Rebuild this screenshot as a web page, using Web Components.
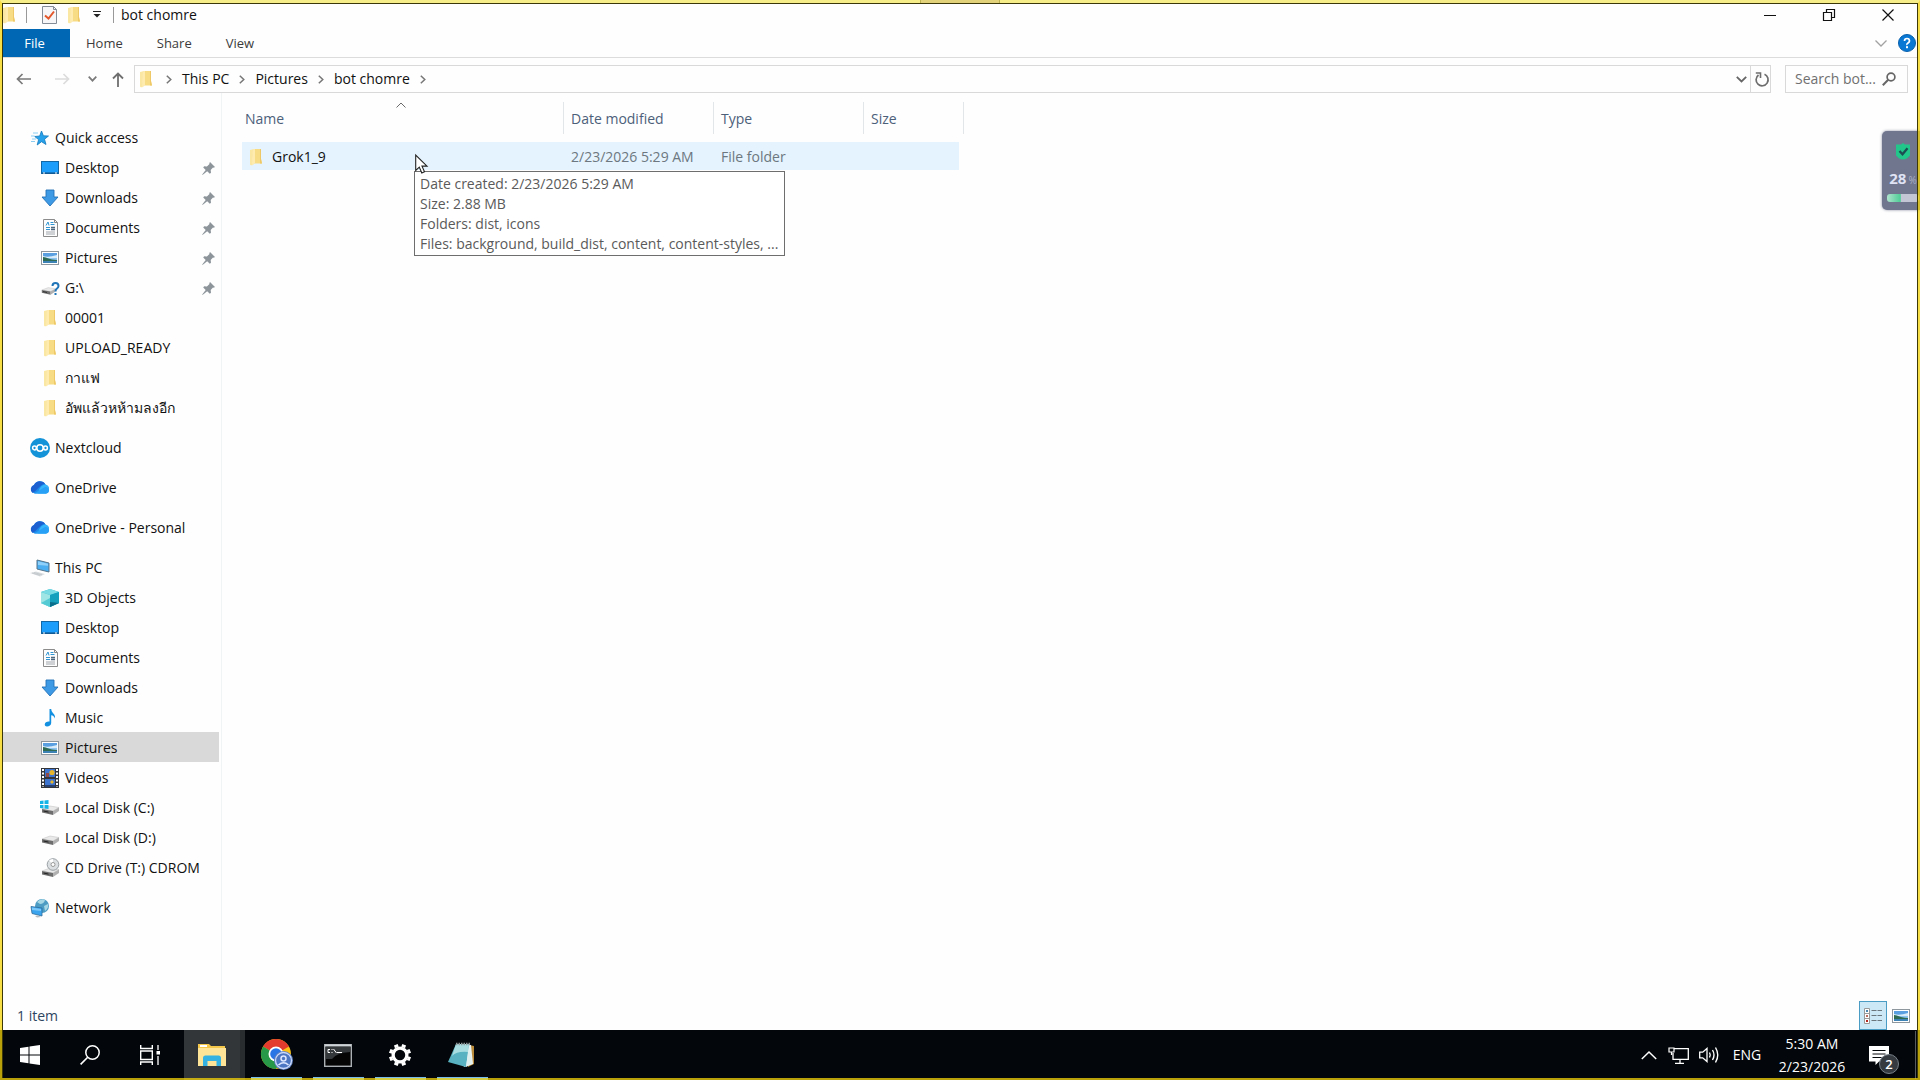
<!DOCTYPE html>
<html lang="en">
<head>
<meta charset="utf-8">
<title>bot chomre</title>
<style>
  html, body { height: 100%; margin: 0; }
  body { overflow: hidden; background: #fff; font: 14px/20px "Open Sans", "Noto Sans", sans-serif; color: #111; }
</style>
</head>
<body>
<desktop-screen>
  <explorer-window></explorer-window>
  <task-bar slot="taskbar"></task-bar>
  <usage-widget slot="overlay"></usage-widget>
</desktop-screen>

<script>
const folder = '<g transform="translate(-1 0)"><path d="M1 2l4-1v15l-3 1.500-1-1z" fill="#fbe7a4"/><path d="M4 1h8v10l1 4.500H4z" fill="#f8dc85"/><path d="M4 1h2v14l-3 2.500z" fill="#fdebb0"/><path d="M11 1h1v10l1 4.500h-2z" fill="#eec866"/></g>';
const picture = '<rect x=".5" y=".5" width="17" height="13" fill="#fff" stroke="#8e979e"/><rect x="2" y="2" width="14" height="10" fill="#8cc4ef"/><path d="M2 2h14v3q-7 3-14 2z" fill="#5aa0e0"/><path d="M2 5q5 2 14-1v3H2z" fill="#d8ecfa"/><path d="M2 6c4 0 6 3 14 3v1H2z" fill="#2f6b52"/><path d="M2 10h14v2H2z" fill="#3c82b4"/>';
const drive = '<path d="M1 10l8-3 9 1.500-6 3.500z" fill="#e9e9e9" stroke="#bdbdbd" stroke-width=".5"/><path d="M1 10l11 2v4L1 13.500z" fill="#6e6e6e"/><path d="M12 12l6-3.500V12l-6 4z" fill="#b0b0b0"/><path d="M2.500 12l5 1.100" stroke="#222"/>';
const cloud = '<path d="M5 13.500A4.500 4.500 0 0 1 4 5 6.500 6.500 0 0 1 15.500 4.500 4.800 4.800 0 0 1 16 13.500z" fill="#1b87e8"/><path d="M4 5A6.500 6.500 0 0 1 15 3.800C9 5 8 10 2.500 13A4.600 4.600 0 0 1 4 5z" fill="#1b5fd0"/><path d="M8 13.500C9 8 12 4.300 15.500 4.500A4.800 4.800 0 0 1 16 13.500z" fill="#36b4fb"/><path d="M4 13.500l11-6.500a4 4 0 0 1 4 3.800 3 3 0 0 1-3 2.700z" fill="#27a0f5"/>';

// name: [width, height, markup]
const ICONS = {
  folder: [13, 18, folder],
  picture: [18, 14, picture],
  checkdoc: [15, 18, '<path d="M.5.500h11l3 3v14H.500z" fill="#f6f6f8" stroke="#848c98"/><path d="M11.500.500v3h3" fill="none" stroke="#848c98"/><path d="M3 9.500l3.500 3L12 5.500" fill="none" stroke="#e2572b" stroke-width="2"/>'],
  customize: [8, 8, '<path d="M0 .5h8" stroke="#222"/><path d="M.5 3h7L4 6.500z" fill="#222"/>'],
  minimize: [12, 12, '<path d="M0 6.500h12" stroke="#111"/>'],
  restore: [12, 12, '<path d="M.5 3.500h8v8h-8zM3.500 3V.500h8v8H9" fill="none" stroke="#111" stroke-width="1.200"/>'],
  close: [12, 12, '<path d="M.5.500l11 11M11.500.500l-11 11" stroke="#111" stroke-width="1.200"/>'],
  chevDownLight: [12, 7, '<path d="M.5.500L6 6l5.500-5.500" fill="none" stroke="#a2a2a2" stroke-width="1.300"/>'],
  help: [18, 18, '<circle cx="9" cy="9" r="8.500" fill="#0878d4" stroke="#0961ad"/><path d="M6.500 7Q6.500 4.500 9 4.500T11.500 7Q11.500 8 10 9T9 11" fill="none" stroke="#fff" stroke-width="1.700"/><rect x="8" y="12.200" width="2" height="2" fill="#fff"/>'],
  back: [16, 12, '<path d="M15 6H1.500M6.500 1l-5 5 5 5" fill="none" stroke="#7a7a7a" stroke-width="1.700"/>'],
  forward: [16, 12, '<path d="M1 6h13.500M9.500 1l5 5-5 5" fill="none" stroke="#dcdcdc" stroke-width="1.700"/>'],
  recent: [9, 6, '<path d="M.7.700l3.800 4 3.800-4" fill="none" stroke="#7a7a7a" stroke-width="1.700"/>'],
  up: [12, 15, '<path d="M6 15V1.500M1 6.500l5-5 5 5" fill="none" stroke="#6f6f6f" stroke-width="1.800"/>'],
  crumb: [6, 9, '<path d="M.8.700l4 3.800-4 3.800" fill="none" stroke="#777" stroke-width="1.500"/>'],
  dropdown: [11, 7, '<path d="M.8.800l4.700 4.700L10.200.800" fill="none" stroke="#666" stroke-width="1.800"/>'],
  refresh: [14, 15, '<path d="M10.500 2.300A6 6 0 1 1 4.500 3" fill="none" stroke="#6d6d6d" stroke-width="1.700"/><path d="M1.800 1h4.700v5" fill="none" stroke="#6d6d6d" stroke-width="1.600"/>'],
  find: [14, 14, '<circle cx="9" cy="5" r="3.900" fill="none" stroke="#666" stroke-width="1.700"/><path d="M6.200 7.800L.8 13.200" stroke="#666" stroke-width="2"/>'],
  sort: [10, 6, '<path d="M.5 5.500L5 1l4.500 4.500" fill="none" stroke="#6b6b6b"/>'],
  pin: [13, 13, '<path d="M8 0l5 5-1.300.700-.700-.200-2.300 2.600.3 2.700-1.200 1-2.600-2.600L.5 12.900l-.3-.300L3.700 8 1.200 5.400l1-1.200 2.700.3L7.500 2.100 7.300 1.200z" fill="#8d959b"/>'],
  star: [20, 20, '<path d="M11.500 3l1.900 4.800 5.100.200-4 3.200 1.500 5.300-4.500-2.800-4.300 3.300 1.400-5.400-3.900-3.100 5-.500z" fill="#27a2ea" stroke="#1379bd" stroke-width=".8"/><path d="M3 5h5M1 8h3.500M2 11h4M1 13.500h4" stroke="#8dcdf2"/>'],
  desktop: [18, 14, '<rect x=".5" y=".5" width="17" height="12" fill="#1a9dfb" stroke="#1467a5"/><path d="M1 12h16" stroke="#0d4c80"/><path d="M2 12h2M14 12h2" stroke="#fff"/>'],
  download: [18, 18, '<path d="M5 1h8v7h4l-8 9-8-9h4z" fill="#3f9ae5" stroke="#2572b8" stroke-width=".9"/>'],
  document: [15, 18, '<path d="M.5.500h11l3 3v14H.500z" fill="#fdfdfd" stroke="#8b8b8b"/><path d="M11.500.500v3h3" fill="none" stroke="#8b8b8b"/><path d="M3 6.500l2-3.500 1 3.500M7.500 3.500h3M7.500 5.500h4M3 8.500h4M3 10.500h4" fill="none" stroke="#2f94d2"/><path d="M8 8.500h4M8 10.500h4" stroke="#4f677d" stroke-width="1.500"/><path d="M3 13h9M3 15h9" stroke="#a0a5aa"/>'],
  drive: [18, 18, drive],
  driveUnknown: [18, 18, '<g transform="translate(0 3) scale(.8)">' + drive + '</g><path d="M11.500 7Q11.500 4 14.500 4T17.500 7Q17.500 8.500 16 9.500T14.500 12.500" fill="none" stroke="#1f74b8" stroke-width="2"/><rect x="13.500" y="14" width="2" height="2" fill="#1f74b8"/>'],
  driveWin: [20, 18, '<g transform="translate(1 0)">' + drive + '</g><path d="M0 2l3.500-.500V5H0zM4.500 1.400L8.500 1v4h-4zM0 6h3.500v3.500L0 9zM4.500 6h4v4l-4-.500z" fill="#14b4e6"/>'],
  driveCd: [18, 20, '<g transform="translate(0 3)">' + drive + '</g><circle cx="12" cy="6.500" r="5.800" fill="#dcdfe1" stroke="#9aa0a4"/><path d="M12 6.500L8 2.500a6 6 0 0 1 4-1.500z" fill="#fff"/><circle cx="12" cy="6.500" r="2" fill="#fff" stroke="#999"/>'],
  nextcloud: [20, 20, '<circle cx="10" cy="10" r="10" fill="#1593d8"/><g fill="none" stroke="#fff" stroke-width="1.500"><circle cx="10" cy="10" r="3.200"/><circle cx="4.500" cy="10" r="1.900"/><circle cx="15.500" cy="10" r="1.900"/></g>'],
  onedrive: [20, 16, cloud],
  pc: [20, 18, '<path d="M7 1l12 3v9L7 10z" fill="#4aaef0" stroke="#54738a"/><path d="M8 2.300l10 2.500v2L8 6z" fill="#8fd0fa"/><path d="M0 14l6-1.500 9 2.500-5 2.500z" fill="#d8dcdf"/><path d="M2 14l8 2.300M4 13.500l8 2.300" stroke="#bcc2c6" stroke-width=".7"/>'],
  cube: [18, 18, '<path d="M9 0l9 3v11l-9 4-9-4V3z" fill="#25b4cc"/><path d="M9 0l9 3-9 3-9-3z" fill="#7adbe4"/><path d="M0 3l9 3v12l-9-4z" fill="#9fe5e5"/><path d="M0 14l9-5v9z" fill="#54cbd4"/><path d="M9 6l9-3v11l-9 4z" fill="#16a0be"/><path d="M9 13l9 1-9 4z" fill="#0b6f8c"/>'],
  music: [12, 18, '<path d="M5.500 0h1.700c0 4 4.500 4.500 3.800 9.500-.7-2.200-2-3-3.800-3.300V14c0 2-2 3.500-4.200 3.500C-.5 17.500 0 12 5.500 12.500z" fill="#1390e0"/>'],
  video: [18, 20, '<rect width="18" height="20" fill="#33363a"/><path d="M2 1v18M16 1v18" stroke="#fff" stroke-width="2" stroke-dasharray="2 1.500"/><path d="M4 1h10v8H4z" fill="#3c74d0"/><path d="M4 11h10v8H4z" fill="#3c74d0"/><circle cx="11" cy="4.500" r="2.600" fill="#e8b62c"/><path d="M5 5h3v4H5z" fill="#8c4a4c"/><path d="M9 14l2-2 2 2-2 2z" fill="#e8b62c"/><path d="M4 17h10v2H4z" fill="#27406e"/>'],
  network: [20, 20, '<circle cx="12" cy="8" r="7" fill="#4c9cc4"/><path d="M7 4q4-4 8-2-1 4-5 4zM14 8l4-2q1 4-3 7z" fill="#a5d8e4"/><path d="M1 8.500l11 1.500v8L2 15.500z" fill="#3aa4ee" stroke="#2e6c9c" stroke-width=".8"/><path d="M2 9.500l9 1.500v2L2 12z" fill="#7cc8f8"/><path d="M5 18l3-.500 3 1.500-4 .500z" fill="#b6bcc0"/>'],
  details: [18, 16, '<path d="M.5.500h5v15h-5zM.500 5.500h5M.500 10.500h5" fill="#fff" stroke="#9a9a9a"/><path d="M2 2h2v2H2z" fill="#4b86ae"/><path d="M2 7h2v2H2z" fill="#bb6d60"/><path d="M2 12h2v2H2z" fill="#b3271e"/><path d="M7.500 2.500h5M13.500 2.500H18M7.500 7.500h5M13.500 7.500H18M7.500 12.500h5M13.500 12.500H18" stroke="#6b757c"/>'],
  cursor: [13, 20, '<path d="M.7 1v15.500l3.600-3.400 2.500 5.800 2.700-1.200-2.500-5.600H12z" fill="#fff" stroke="#222" stroke-width="1.100"/>'],
  shield: [16, 17, '<path d="M8 0l2 1.500h5v11L12.500 15q-4.500 3-9 0L1 12.500v-11h5z" fill="#22c58a"/><path d="M4.500 8l3 3.200 5-6" fill="none" stroke="#1d4d52" stroke-width="2.300"/>'],
  start: [20, 20, '<path d="M0 3l8.500-1.200v7.700H0zM9.500 1.600L20 0v9.500H9.500zM0 10.500h8.500v7.700L0 17zM9.500 10.500H20V20L9.500 18.400z" fill="#fff"/>'],
  search: [20, 20, '<circle cx="12.500" cy="7.500" r="6.700" fill="none" stroke="#fff" stroke-width="1.500"/><path d="M7.700 12.300L.6 19.400" stroke="#fff" stroke-width="1.600"/>'],
  taskview: [20, 20, '<path d="M.7 0v3.500h11.600V0M.700 6h11.600v8.500H.700zM.700 20v-3h11.600v3" fill="none" stroke="#fff" stroke-width="1.400"/><path d="M18 0v5M18 11v9" stroke="#fff" stroke-width="1.300"/><rect x="16.500" y="6" width="3.500" height="3.500" fill="#fff"/>'],
  explorer: [28, 24, '<path d="M0 1h11l2 2h14v20H0z" fill="#f4c64a"/><path d="M2 2h7v2H2z" fill="#fff"/><path d="M0 5h28v18H0z" fill="#fee496"/><path d="M5 23v-8q0-2.500 2.500-2.500h13Q23 12.500 23 15v8h-4.500v-5h-9v5z" fill="#35b2e2"/>'],
  chrome: [30, 34, '<circle cx="15" cy="16" r="15" fill="#fbc116"/><path d="M15 16L2 8.500a15 15 0 0 1 26 0z" fill="#e33b2e"/><path d="M15 16L2 8.500A15 15 0 0 0 15 31l6.500-11.200z" fill="#279847"/><path d="M15 8.500h13L24 6H8z" fill="#e33b2e"/><circle cx="15" cy="16" r="7.500" fill="#fff"/><circle cx="15" cy="16" r="5.800" fill="#2a75e6"/><circle cx="22.500" cy="22.500" r="9.500" fill="#5e7fc0"/><circle cx="22.500" cy="22.500" r="8" fill="#4d76c2" stroke="#ccdafa" stroke-width="1.300"/><circle cx="22.500" cy="20.500" r="2.500" fill="none" stroke="#dce7ff" stroke-width="1.500"/><path d="M17.500 27q5-4.500 10 0" fill="none" stroke="#dce7ff" stroke-width="1.600"/>'],
  terminal: [28, 23, '<rect x=".7" y=".7" width="26.600" height="21.600" fill="#050505" stroke="#aab0b4" stroke-width="1.400"/><path d="M1 1.500h26" stroke="#cfd4d8" stroke-width="2"/><path d="M2 3h24v5Q12 9 8 15H2z" fill="#34383b"/><path d="M6 5.500H4v3h2M8 5v1M8 8v1M9.500 5l3 4M13 8.500h5" fill="none" stroke="#fff"/>'],
  gear: [22, 22, '<g transform="scale(.917)"><g stroke="#fff" stroke-width="4.400"><path d="M8.600 3.800l-1.200-3M15.400 3.800l1.200-3M8.600 20.200l-1.200 3M15.400 20.200l1.200 3M3.800 8.600l-3-1.200M3.800 15.400l-3 1.200M20.200 8.600l3-1.200M20.200 15.400l3 1.200"/></g><circle cx="12" cy="12" r="7.500" fill="none" stroke="#fff" stroke-width="3.600"/></g>'],
  notepad: [28, 26, '<path d="M21 3l5 1v18l-6 3z" fill="#b98a3a"/><path d="M9 2l14 1 2 19-9 3z" fill="#eaf3f3"/><path d="M8 2h13l-3 23L0 20z" fill="#58b2c1"/><path d="M8 2h13l-1 8Q9 9 4 14z" fill="#a8dde2"/><path d="M18 25l6-3-3-17z" fill="#dfeeee"/><path d="M8 2h14" stroke="#8f999c" stroke-width="2.500" stroke-dasharray="1.500 1"/>'],
  trayUp: [16, 9, '<path d="M.8 8L8 1l7.200 7" fill="none" stroke="#fff" stroke-width="1.500"/>'],
  trayNet: [20, 17, '<path d="M5 1.700h14.300v10.600H4V6" fill="none" stroke="#fff" stroke-width="1.300"/><path d="M11 12v4M6 16.300h9" stroke="#fff" stroke-width="1.300"/><path d="M0 1h5v4H0zM2.500 5v3" fill="#05080b" stroke="#fff" stroke-width="1.200"/>'],
  trayVolume: [20, 18, '<path d="M.7 6.200h3L8 2.500v13L3.700 11.800h-3z" fill="none" stroke="#fff" stroke-width="1.300"/><path d="M10.500 6.500q1.500 2.500 0 5M13.500 4q3 5 0 10M16.500 1.500q4.500 7.500 0 15" fill="none" stroke="#fff" stroke-width="1.400"/>'],
  message: [20, 19, '<path d="M0 0h20v15.500H10L6.500 19v-3.500H0z" fill="#fff"/><path d="M3.500 4.500h13M3.500 8h13M3.500 11.500h9" stroke="#05080b" stroke-width="1.200"/>']
};

function makeIcon(name, className = '') {
  const el = document.createElement('ui-icon');
  el.setAttribute('name', name);
  el.className = className;
  return el;
}

function define(name, template, setup) {
  const t = document.createElement('template');
  t.innerHTML = '<style>:host,*{box-sizing:border-box}button{all:unset;box-sizing:border-box;display:flex;align-items:center;justify-content:center}</style>' + template;
  customElements.define(name, class extends HTMLElement {
    connectedCallback() {
      if (this.shadowRoot) return;
      this.attachShadow({ mode: 'open' }).append(t.content.cloneNode(true));
      if (setup) setup(this, this.shadowRoot);
    }
  });
}

define('ui-icon', '<style>:host{display:inline-flex;flex:none}svg{display:block;overflow:visible}</style><span></span>', (host, root) => {
  const [w, h, body] = ICONS[host.getAttribute('name')];
  root.querySelector('span').innerHTML = `<svg width="${w}" height="${h}" viewBox="0 0 ${w} ${h}" aria-hidden="true">${body}</svg>`;
});

define('desktop-screen', `
<style>
  :host{display:flex;flex-direction:column;height:100vh;position:relative}
  slot:not([name]){display:flex;flex:1;min-height:0}
  .frame{position:absolute;inset:0;pointer-events:none;border:2px solid rgba(245,212,10,.75);border-top:3px solid rgba(243,229,75,.65);z-index:5}
  .frame::after{content:"";position:absolute;inset:0;border:1px solid #3c3808;border-bottom:0}
  .grip{position:absolute;top:0;left:calc(50% - 40px);width:80px;height:3px;background:#e2d37a;border:solid #bdb04e;border-width:0 1px;z-index:6}
</style>
<slot></slot><slot name="taskbar"></slot><slot name="overlay"></slot><div class="frame"></div><div class="grip"></div>`);

define('explorer-window', `
<style>
  :host{display:flex;flex-direction:column;flex:1;min-width:0;background:#fefefe;padding:0 3px}
  main{display:flex;flex:1;min-height:0}
</style>
<title-bar>bot chomre</title-bar>
<ribbon-tabs></ribbon-tabs>
<address-row></address-row>
<main><nav-pane></nav-pane><file-list></file-list></main>
<status-bar>1 item</status-bar>`);

define('title-bar', `
<style>
  :host{display:flex;align-items:center;height:29px}
  .quick{display:flex;align-items:center;height:20px;flex:1}
  i{width:1px;height:16px;background:#999}
  .quick > ui-icon{margin-right:10px}
  .quick button:nth-of-type(1){width:15px;margin:0 11px 0 15px}
  .arrow{width:32px}
  .title{margin-left:7px;line-height:20px}
  .caption{display:flex}
  .caption button{width:59px;height:24px}
</style>
<div class="quick"><ui-icon name="folder"></ui-icon><i></i>
<button aria-label="Properties"><ui-icon name="checkdoc"></ui-icon></button>
<button aria-label="New folder"><ui-icon name="folder"></ui-icon></button>
<button class="arrow" aria-label="Customize toolbar"><ui-icon name="customize"></ui-icon></button><i></i>
<span class="title"><slot></slot></span></div>
<div class="caption"><button aria-label="Minimize"><ui-icon name="minimize"></ui-icon></button><button aria-label="Restore"><ui-icon name="restore"></ui-icon></button><button aria-label="Close"><ui-icon name="close"></ui-icon></button></div>`);

define('ribbon-tabs', `
<style>
  :host{display:flex;align-items:center;height:29px;border-bottom:1px solid #dcdcdc;font-size:13px;color:#3c3c3c}
  button{padding:0 17px;height:28px}
  .file{background:#0067b4;color:#fff;width:67px;padding:0 20px 0 16px;margin-right:-1px}
  .right{margin-left:auto;display:flex;align-items:center;gap:11px;padding-right:1px}
  .right button{padding:0}
</style>
<button class="file">File</button><button>Home</button><button>Share</button><button>View</button>
<div class="right"><button aria-label="Minimize ribbon"><ui-icon name="chevDownLight"></ui-icon></button><button aria-label="Help"><ui-icon name="help"></ui-icon></button></div>`);

define('address-row', `
<style>
  :host{display:flex;height:35px;padding:7px 9px 0 13px}
  .go{display:flex;align-items:center}
  .go button{width:16px;height:28px}
  .go button:nth-child(2){margin-left:22px}
  .go button:nth-child(3){margin:0 10px 0 14px}
  .path{flex:1;display:flex;align-items:center;height:28px;border:1px solid #d9d9d9;padding-left:5px;margin-left:8px}
  .path > ui-icon:first-child{margin-right:3px}
  .crumb{margin:0 10px}
  a{color:inherit;text-decoration:none}
  .tools{margin-left:auto;display:flex;align-items:center}
  .tools button{width:20px;height:26px}
  .tools .down{width:17px}
  .tools .reload{border-left:1px solid #d9d9d9}
  form{display:flex;align-items:center;width:123px;height:28px;border:1px solid #d9d9d9;margin-left:14px;padding:0 11px 0 9px}
  input{all:unset;flex:1;min-width:0;font:inherit;color:#666}
  input::placeholder{color:#707070;opacity:1}
</style>
<div class="go"><button aria-label="Back"><ui-icon name="back"></ui-icon></button><button aria-label="Forward"><ui-icon name="forward"></ui-icon></button><button aria-label="Recent locations"><ui-icon name="recent"></ui-icon></button><button aria-label="Up"><ui-icon name="up"></ui-icon></button></div>
<div class="path"><ui-icon name="folder"></ui-icon>
<ui-icon class="crumb" name="crumb"></ui-icon><a href="#">This PC</a>
<ui-icon class="crumb" name="crumb"></ui-icon><a href="#">Pictures</a>
<ui-icon class="crumb" name="crumb"></ui-icon><a href="#">bot chomre</a>
<ui-icon class="crumb" name="crumb"></ui-icon>
<div class="tools"><button class="down" aria-label="Previous locations"><ui-icon name="dropdown"></ui-icon></button><button class="reload" aria-label="Refresh"><ui-icon name="refresh"></ui-icon></button></div></div>
<form><input type="text" aria-label="Search bot chomre" placeholder="Search bot..."><ui-icon name="find"></ui-icon></form>`);

define('nav-item', `
<style>
  :host{display:block}
  a{display:flex;align-items:center;height:30px;padding:2px 4px 0 26px;color:inherit;text-decoration:none;white-space:nowrap}
  :host([sub]) a{padding-left:36px}
  :host([selected]) a{background:#d9d9d9}
  .box{display:flex;width:22px;justify-content:center;margin-right:4px}
  .pin{margin-left:auto}
</style>
<a href="#"><span class="box"></span><slot></slot></a>`, (host, root) => {
  root.querySelector('.box').append(makeIcon(host.getAttribute('icon')));
  if (host.hasAttribute('pinned')) root.querySelector('a').append(makeIcon('pin', 'pin'));
});

define('nav-pane', `
<style>
  :host{display:block;width:219px;border-right:1px solid #f1f4f5;padding:29px 2px 0 0;overflow:hidden}
  nav{display:flex;flex-direction:column;gap:10px}
</style>
<nav>
<div><nav-item icon="star">Quick access</nav-item>
<nav-item sub pinned icon="desktop">Desktop</nav-item>
<nav-item sub pinned icon="download">Downloads</nav-item>
<nav-item sub pinned icon="document">Documents</nav-item>
<nav-item sub pinned icon="picture">Pictures</nav-item>
<nav-item sub pinned icon="driveUnknown">G:\\</nav-item>
<nav-item sub icon="folder">00001</nav-item>
<nav-item sub icon="folder">UPLOAD_READY</nav-item>
<nav-item sub icon="folder">กาแฟ</nav-item>
<nav-item sub icon="folder">อัพแล้วหห้ามลงอีก</nav-item></div>
<nav-item icon="nextcloud">Nextcloud</nav-item>
<nav-item icon="onedrive">OneDrive</nav-item>
<nav-item icon="onedrive">OneDrive - Personal</nav-item>
<div><nav-item icon="pc">This PC</nav-item>
<nav-item sub icon="cube">3D Objects</nav-item>
<nav-item sub icon="desktop">Desktop</nav-item>
<nav-item sub icon="document">Documents</nav-item>
<nav-item sub icon="download">Downloads</nav-item>
<nav-item sub icon="music">Music</nav-item>
<nav-item sub selected icon="picture">Pictures</nav-item>
<nav-item sub icon="video">Videos</nav-item>
<nav-item sub icon="driveWin">Local Disk (C:)</nav-item>
<nav-item sub icon="drive">Local Disk (D:)</nav-item>
<nav-item sub icon="driveCd">CD Drive (T:) CDROM</nav-item></div>
<nav-item icon="network">Network</nav-item>
</nav>`);

define('file-list', `
<style>
  :host{display:block;flex:1;position:relative;padding:9px 0 0 20px}
  table{border-collapse:separate;border-spacing:0;table-layout:fixed;width:722px}
  th{height:32px;padding:2px 0 0 7px;font-weight:400;text-align:left;color:#4c607a;border-right:1px solid #e3e6e8;position:relative}
  th:first-child{padding-left:3px}
  th ui-icon{position:absolute;left:50%;top:0;margin-left:-7px}
  .gap td{height:8px;padding:0;background:none}
  td{height:28px;padding:2px 0 0 7px;background:#e4f3fd;color:#6d7780}
  td:first-child{padding-left:8px;color:#111}
  .name{display:flex;align-items:center;gap:9px}
  tr:not(.gap) td:last-child{border-right:5px solid transparent;background-clip:padding-box}
  .tip{position:absolute;left:192px;top:78px;border:1px solid #6e6e6e;background:#fff;padding:2px 6px 1px 5px;color:#5a5a5a;white-space:nowrap}
  .cursor{position:absolute;left:193px;top:61px}
</style>
<table><colgroup><col style="width:322px"><col style="width:150px"><col style="width:150px"><col style="width:100px"></colgroup>
<thead><tr><th>Name<ui-icon name="sort"></ui-icon></th><th>Date modified</th><th>Type</th><th>Size</th></tr></thead>
<tbody><tr class="gap"><td colspan="4"></td></tr>
<tr><td><span class="name"><ui-icon name="folder"></ui-icon>Grok1_9</span></td><td>2/23/2026 5:29 AM</td><td>File folder</td><td></td></tr></tbody></table>
<div class="tip" role="tooltip"><div>Date created: 2/23/2026 5:29 AM</div><div>Size: 2.88 MB</div><div>Folders: dist, icons</div><div>Files: background, build_dist, content, content-styles, ...</div></div>
<ui-icon class="cursor" name="cursor"></ui-icon>`);

define('status-bar', `
<style>
  :host{display:flex;align-items:center;height:30px;padding:1px 2px 0 14px;color:#2e4561}
  .views{margin-left:auto;display:flex;align-items:center}
  button{width:28px;height:29px}
  .on{background:#cce8f6;border:1px solid #4a9cc4}
</style>
<span><slot></slot></span>
<div class="views"><button class="on" aria-label="Details view"><ui-icon name="details"></ui-icon></button><button aria-label="Large icons view"><ui-icon name="picture"></ui-icon></button></div>`);

define('usage-widget', `
<style>
  :host{position:absolute;right:0;top:131px;width:38px;height:79px;display:flex;flex-direction:column;align-items:center;background:#70768e;border-radius:5px 0 0 5px;box-shadow:0 0 3px #8a8fa3;padding:12px 0 0 4px;color:#dfe3f4}
  .value{display:flex;align-items:baseline;gap:2px;font-weight:700;font-size:15px;line-height:20px;margin-top:8px;white-space:nowrap}
  small{font-size:10px;font-weight:400;color:#aab0c6}
  .bar{width:32px;height:8px;border-radius:3px;background:linear-gradient(90deg,#aee3cc,#4fce97 42%,#c3c6d4 43%);margin-top:4px}
</style>
<ui-icon name="shield"></ui-icon><span class="value">28<small>%</small></span><div class="bar"></div>`);

define('task-bar', `
<style>
  :host{display:flex;height:50px;background:#03070b;color:#fff;padding:0 4px 0 0;flex:none}
  button{height:50px;width:60px;position:relative}
  .apps,.tray{display:flex;align-items:center}
  .app{width:62px}
  .active{background:#323639;border-right:5px solid #292c2f;width:61px;margin-left:4px}
  .run::after{content:"";position:absolute;left:6px;right:5px;bottom:0;height:3px;background:#76b9ed}
  .tray{margin-left:auto}
  .tray button{width:30px}
  .tray .lang{width:46px}
  .tray .clock{width:84px;flex-direction:column;line-height:23px}
  .tray .note{width:49px;margin-right:12px}
  .badge{position:absolute;left:25px;top:24px;width:20px;height:20px;border-radius:50%;background:#343a40;border:1px solid #788088;font-size:13px;line-height:18px;text-align:center;font-weight:600}
  i{width:1px;height:48px;background:#565a5e}
</style>
<div class="apps">
<button aria-label="Start"><ui-icon name="start"></ui-icon></button>
<button aria-label="Search"><ui-icon name="search"></ui-icon></button>
<button aria-label="Task view"><ui-icon name="taskview"></ui-icon></button>
<button class="app active" aria-label="File Explorer"><ui-icon name="explorer"></ui-icon></button>
<button class="app run" aria-label="Chrome"><ui-icon name="chrome"></ui-icon></button>
<button class="app run" aria-label="Command Prompt"><ui-icon name="terminal"></ui-icon></button>
<button class="app run" aria-label="Settings"><ui-icon name="gear"></ui-icon></button>
<button class="app run" aria-label="Notepad"><ui-icon name="notepad"></ui-icon></button>
</div>
<div class="tray">
<button aria-label="Show hidden icons"><ui-icon name="trayUp"></ui-icon></button>
<button aria-label="Network"><ui-icon name="trayNet"></ui-icon></button>
<button aria-label="Volume"><ui-icon name="trayVolume"></ui-icon></button>
<button class="lang">ENG</button>
<button class="clock"><span>5:30 AM</span><span>2/23/2026</span></button>
<button class="note" aria-label="Notifications"><ui-icon name="message"></ui-icon><span class="badge">2</span></button><i></i>
</div>`);
</script>
</body>
</html>
